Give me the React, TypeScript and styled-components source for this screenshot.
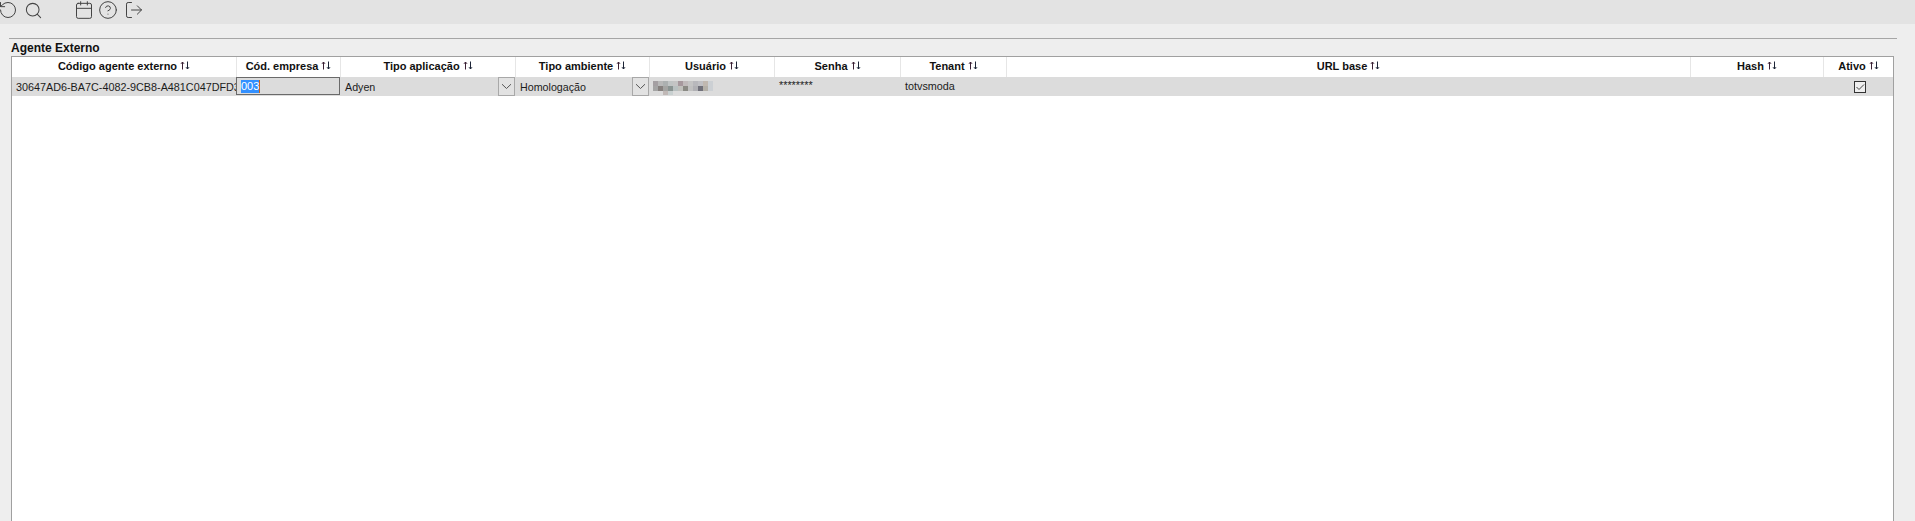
import React from "react";
import styled, { createGlobalStyle } from "styled-components";
import { Calendar, CircleHelp, LogOut, RotateCcw, Search } from "lucide-react";

const Global = createGlobalStyle`
  html, body { margin: 0; padding: 0; height: 100%; overflow: hidden; background: #eeeeee; }
  body { font-family: "Liberation Sans", Arial, sans-serif; color: #111; }
`;

const COLS = "224px 104px 175px 134px 125px 126px 106px 684px 133px 70px";

const Page = styled.div`
  height: 521px;
  overflow: hidden;
  display: flex;
  flex-direction: column;
`;
const Toolbar = styled.div`
  height: 24px;
  flex: none;
  background: #e3e3e3;
  display: flex;
  align-items: flex-start;
  color: #444;
`;
const IconSlot = styled.span<{ $left: number; $top?: number }>`
  display: flex;
  margin-left: ${(p) => p.$left}px;
  margin-top: ${(p) => p.$top ?? 0}px;
`;
const Section = styled.section`
  flex: 1;
  min-height: 0;
  margin: 14px 18px 0 9px;
  border-top: 1px solid #a6a6a6;
  display: flex;
  flex-direction: column;
`;
const Title = styled.h2`
  margin: 2px 0 1px 2px;
  height: 14px;
  font-size: 12px;
  line-height: 14px;
  font-weight: 700;
  color: #111;
`;
const Table = styled.div`
  flex: 1;
  margin: 0 3px 0 2px;
  background: #fff;
  border: 1px solid #a0a0a0;
  border-bottom: none;
`;
const Row = styled.div`
  display: grid;
  grid-template-columns: ${COLS};
`;
const HeaderCell = styled.div`
  height: 20px;
  box-sizing: border-box;
  border-left: 1px solid #e6e6e6;
  display: flex;
  align-items: center;
  justify-content: center;
  gap: 3px;
  font-size: 11px;
  font-weight: 700;
  white-space: nowrap;
  padding-bottom: 3px;
  &:first-child { border-left: none; }
`;
const DataRow = styled(Row)`
  background: #dcdcdc;
  height: 19px;
`;
const Cell = styled.div<{ $align?: string; $raise?: number; $pad?: number }>`
  min-width: 0;
  overflow: hidden;
  white-space: nowrap;
  box-sizing: border-box;
  display: flex;
  align-items: center;
  justify-content: ${(p) => p.$align || "flex-start"};
  padding: 0 0 ${(p) => p.$raise ?? 0}px ${(p) => p.$pad ?? 4}px;
  font-size: 10.8px;
  color: #1b1b1b;
`;
const EditCell = styled.div`
  height: 18px;
  box-sizing: border-box;
  border: 1px solid #6a6a6a;
  background: #dcdcdc;
  padding-left: 4px;
  display: flex;
  align-items: center;
  font-size: 11px;
`;
const Selected = styled.span`
  background: #3390ff;
  color: #fff;
  line-height: 13px;
  padding-right: 0;
  border-right: 1px solid #c8641e;
`;
const SelectCell = styled.div`
  display: flex;
  align-items: stretch;
  font-size: 10.7px;
  color: #1b1b1b;
`;
const SelectText = styled.span`
  flex: 1;
  display: flex;
  align-items: center;
  padding: 0 0 0 5px;
`;
const SelectButton = styled.span`
  width: 17px;
  box-sizing: border-box;
  border: 1px solid #a8a8a8;
  background: #e2e2e2;
  display: flex;
  align-items: center;
  justify-content: center;
`;
const Box = styled.span`
  width: 12px;
  height: 12px;
  box-sizing: border-box;
  border: 1px solid #333;
  background: #eee;
  display: flex;
`;
const BlurredText = styled.svg`
  margin-top: 3px;
  flex: none;
`;

const columns = [
  "Código agente externo",
  "Cód. empresa",
  "Tipo aplicação",
  "Tipo ambiente",
  "Usuário",
  "Senha",
  "Tenant",
  "URL base",
  "Hash",
  "Ativo",
];

const blur: [number, number, number, number, string][] = [
  [0, 0, 5, 5, "#a49fa2"], [5, 0, 5, 5, "#b8b8b8"], [10, 0, 5, 5, "#acb0b0"], [15, 0, 5, 5, "#c0c4c4"],
  [20, 0, 5, 5, "#c4c4c4"], [25, 0, 5, 5, "#a6989d"], [30, 0, 5, 5, "#c0babb"], [35, 0, 5, 5, "#c4c4c4"],
  [40, 0, 5, 5, "#b8b8bc"], [45, 0, 5, 5, "#c0c0c4"], [50, 0, 5, 5, "#c0b8b0"], [55, 0, 5, 5, "#ccd0d4"],
  [0, 5, 5, 5, "#a4a4a4"], [5, 5, 5, 5, "#86807e"], [10, 5, 5, 5, "#a4a4a2"], [15, 5, 5, 5, "#8a9492"],
  [20, 5, 5, 5, "#b8c0c0"], [25, 5, 5, 5, "#c0c0bc"], [30, 5, 5, 5, "#8a8a84"], [35, 5, 5, 5, "#c0c0c0"],
  [40, 5, 5, 5, "#b0b0b4"], [45, 5, 5, 5, "#70707a"], [50, 5, 5, 5, "#b4b0a8"], [55, 5, 5, 5, "#ccd0d4"],
  [10, 10, 5, 4, "#c0b8b6"], [15, 10, 5, 4, "#c8d0d0"],
];

const SortIcon = () => (
  <svg width="10" height="9" viewBox="0 0 10 9" fill="none" strokeWidth="1">
    <path d="M2.5 8.5V1M1 2.8 2.5 1 4 2.8" stroke="#3a2034" />
    <path d="M7.5 .5V8M6 6.2 7.5 8 9 6.2" stroke="#1c2436" />
  </svg>
);

const Chevron = () => (
  <svg width="11" height="7" viewBox="0 0 11 7" fill="none">
    <path d="M1 1.2 5.5 5.5 10 1.2" stroke="#555" strokeWidth="1" />
  </svg>
);

export default function App() {
  return (
    <Page>
      <Global />
      <Toolbar>
        <IconSlot $left={-2}><RotateCcw size={20} strokeWidth={1.2} /></IconSlot>
        <IconSlot $left={6} $top={1}><Search size={19} strokeWidth={1.3} /></IconSlot>
        <IconSlot $left={31}><Calendar size={20} strokeWidth={1.2} /></IconSlot>
        <IconSlot $left={4}><CircleHelp size={20} strokeWidth={1.2} /></IconSlot>
        <IconSlot $left={6}><LogOut size={20} strokeWidth={1.2} /></IconSlot>
      </Toolbar>
      <Section>
        <Title>Agente Externo</Title>
        <Table>
          <Row>
            {columns.map((c) => (
              <HeaderCell key={c}>
                {c}
                <SortIcon />
              </HeaderCell>
            ))}
          </Row>
          <DataRow>
            <Cell>30647AD6-BA7C-4082-9CB8-A481C047DFD3</Cell>
            <EditCell><Selected>003</Selected></EditCell>
            <SelectCell><SelectText>Adyen</SelectText><SelectButton><Chevron /></SelectButton></SelectCell>
            <SelectCell><SelectText>Homologação</SelectText><SelectButton><Chevron /></SelectButton></SelectCell>
            <Cell>
              <BlurredText width="60" height="14" viewBox="0 0 60 14">
                {blur.map(([x, y, w, h, f], i) => (
                  <rect key={i} x={x} y={y} width={w} height={h} fill={f} />
                ))}
              </BlurredText>
            </Cell>
            <Cell $raise={3} $pad={5}>********</Cell>
            <Cell $raise={2} $pad={5}>totvsmoda</Cell>
            <Cell />
            <Cell />
            <Cell $align="center">
              <Box>
                <svg width="10" height="10" viewBox="0 0 10 10" fill="none">
                  <path d="M1.5 5 4 7.5 9 2.5" stroke="#444" strokeWidth="1" />
                </svg>
              </Box>
            </Cell>
          </DataRow>
        </Table>
      </Section>
    </Page>
  );
}
